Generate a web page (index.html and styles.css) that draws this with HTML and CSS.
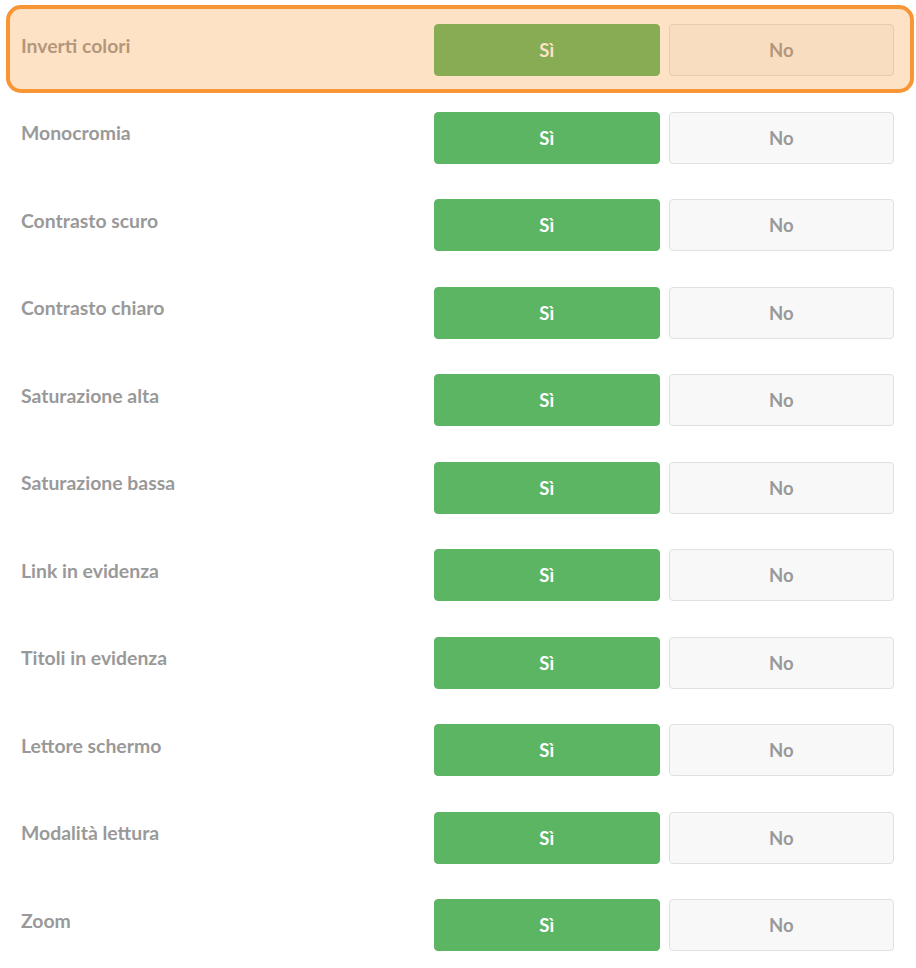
FILE: index.html
```html
<!DOCTYPE html>
<html lang="it">
<head>
<meta charset="utf-8">
<title>Accessibilità</title>
<link rel="stylesheet" href="styles.css">
</head>
<body>
<div class="list">
  <div class="row row--focus">
    <div class="label">Inverti colori</div>
    <div class="choices"><button class="btn btn-yes">Sì</button><button class="btn btn-no">No</button></div>
    <div class="focus-ring"></div>
  </div>
  <div class="row">
    <div class="label">Monocromia</div>
    <div class="choices"><button class="btn btn-yes">Sì</button><button class="btn btn-no">No</button></div>
  </div>
  <div class="row">
    <div class="label">Contrasto scuro</div>
    <div class="choices"><button class="btn btn-yes">Sì</button><button class="btn btn-no">No</button></div>
  </div>
  <div class="row">
    <div class="label">Contrasto chiaro</div>
    <div class="choices"><button class="btn btn-yes">Sì</button><button class="btn btn-no">No</button></div>
  </div>
  <div class="row">
    <div class="label">Saturazione alta</div>
    <div class="choices"><button class="btn btn-yes">Sì</button><button class="btn btn-no">No</button></div>
  </div>
  <div class="row">
    <div class="label">Saturazione bassa</div>
    <div class="choices"><button class="btn btn-yes">Sì</button><button class="btn btn-no">No</button></div>
  </div>
  <div class="row">
    <div class="label">Link in evidenza</div>
    <div class="choices"><button class="btn btn-yes">Sì</button><button class="btn btn-no">No</button></div>
  </div>
  <div class="row">
    <div class="label">Titoli in evidenza</div>
    <div class="choices"><button class="btn btn-yes">Sì</button><button class="btn btn-no">No</button></div>
  </div>
  <div class="row">
    <div class="label">Lettore schermo</div>
    <div class="choices"><button class="btn btn-yes">Sì</button><button class="btn btn-no">No</button></div>
  </div>
  <div class="row">
    <div class="label">Modalità lettura</div>
    <div class="choices"><button class="btn btn-yes">Sì</button><button class="btn btn-no">No</button></div>
  </div>
  <div class="row">
    <div class="label">Zoom</div>
    <div class="choices"><button class="btn btn-yes">Sì</button><button class="btn btn-no">No</button></div>
  </div>
</div>
</body>
</html>
```

FILE: styles.css
```css
html, body {
  margin: 0;
  padding: 0;
  background: #ffffff;
}

body {
  font-family: Lato, "Open Sans", "Liberation Sans", sans-serif;
  font-weight: 700;
}

.list {
  padding-top: 6px;
}

.row {
  position: relative;
  display: flex;
  align-items: flex-start;
  height: 87.5px;
  box-sizing: border-box;
  padding: 18px 22px 18px 21px;
}

.label {
  flex: 1;
  font-size: 19.4px;
  line-height: 24px;
  padding-top: 9.5px;
  color: #999999;
}

.choices {
  display: flex;
  gap: 9px;
  width: 460px;
}

.btn {
  flex: 1;
  height: 52px;
  margin: 0;
  border-radius: 4px;
  font-family: inherit;
  font-weight: 700;
  font-size: 18.5px;
  cursor: pointer;
}

.btn-yes {
  background: #5cb562;
  border: 1px solid #5cb562;
  color: #ffffff;
}

.btn-no {
  background: #f8f8f8;
  border: 1px solid #e0e0e0;
  color: #999999;
}

.focus-ring {
  position: absolute;
  left: 6px;
  right: 2px;
  top: -1px;
  height: 88px;
  box-sizing: border-box;
  border: 4px solid #f89535;
  border-radius: 15px;
  background: rgba(253, 146, 45, 0.27);
  pointer-events: none;
}
```
